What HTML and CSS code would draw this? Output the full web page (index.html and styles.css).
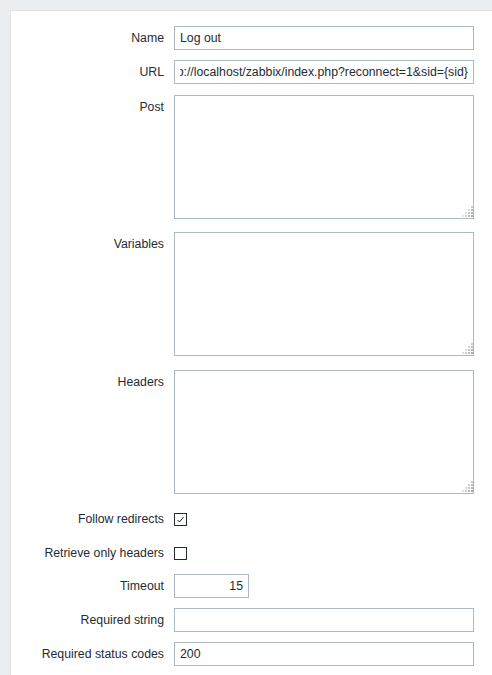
FILE: index.html
```html
<!DOCTYPE html>
<html lang="en">
<head>
  <meta charset="UTF-8" />
  <title>Web scenario step</title>
  <link rel="stylesheet" href="styles.css">
</head>
<body>
  <div class="panel">
    <form class="step-form">
      <div class="row">
        <label class="row-label" for="name">Name</label>
        <div class="row-field"><input type="text" id="name" value="Log out" /></div>
      </div>
      <div class="row row-url">
        <label class="row-label" for="url">URL</label>
        <div class="row-field"><input type="text" id="url" value="http://localhost/zabbix/index.php?reconnect=1&amp;sid={sid}" /></div>
      </div>
      <div class="row row-area row-post">
        <label class="row-label" for="post">Post</label>
        <div class="row-field area-wrap">
          <textarea id="post"></textarea>
          <svg class="grip" width="12" height="12" viewBox="0 0 12 12"><use href="#grip-dots" /></svg>
        </div>
      </div>
      <div class="row row-area">
        <label class="row-label" for="variables">Variables</label>
        <div class="row-field area-wrap">
          <textarea id="variables"></textarea>
          <svg class="grip" width="12" height="12" viewBox="0 0 12 12"><use href="#grip-dots" /></svg>
        </div>
      </div>
      <div class="row row-area">
        <label class="row-label" for="headers">Headers</label>
        <div class="row-field area-wrap">
          <textarea id="headers"></textarea>
          <svg class="grip" width="12" height="12" viewBox="0 0 12 12"><use href="#grip-dots" /></svg>
        </div>
      </div>
      <div class="row row-check">
        <label class="row-label">Follow redirects</label>
        <div class="row-field">
          <span class="check is-checked">
            <svg width="11" height="11" viewBox="0 0 11 11"><path d="M2.5 6 L4.5 8 L8.5 3" fill="none" stroke="#1f2c33" stroke-width="1" /></svg>
          </span>
        </div>
      </div>
      <div class="row row-check">
        <label class="row-label">Retrieve only headers</label>
        <div class="row-field"><span class="check"></span></div>
      </div>
      <div class="row">
        <label class="row-label" for="timeout">Timeout</label>
        <div class="row-field"><input type="text" id="timeout" class="input-small" value="15" /></div>
      </div>
      <div class="row">
        <label class="row-label" for="required">Required string</label>
        <div class="row-field"><input type="text" id="required" value="" /></div>
      </div>
      <div class="row">
        <label class="row-label" for="codes">Required status codes</label>
        <div class="row-field"><input type="text" id="codes" value="200" /></div>
      </div>
    </form>
  </div>

  <!-- resize grip dots, shared by the textareas -->
  <svg width="0" height="0" class="defs">
    <defs>
      <g id="grip-dots">
        <rect x="10" y="1" width="2" height="2" fill="#c9c9c9" />
        <rect x="7" y="4" width="2" height="2" fill="#d6d6d6" />
        <rect x="10" y="4" width="2" height="2" fill="#b9b9b9" />
        <rect x="4" y="7" width="2" height="2" fill="#dcdcdc" />
        <rect x="7" y="7" width="2" height="2" fill="#c6c6c6" />
        <rect x="10" y="7" width="2" height="2" fill="#b3b3b3" />
        <rect x="1" y="10" width="2" height="2" fill="#e2e2e2" />
        <rect x="4" y="10" width="2" height="2" fill="#cfcfcf" />
        <rect x="7" y="10" width="2" height="2" fill="#bdbdbd" />
        <rect x="10" y="10" width="2" height="2" fill="#ababab" />
      </g>
    </defs>
  </svg>

  <script>
    // long URL is shown scrolled to its end, as after typing it
    const url = document.getElementById('url');
    url.scrollLeft = url.scrollWidth;
  </script>
</body>
</html>
```

FILE: styles.css
```css
body {
  margin: 0;
  background-color: #ebeef0;
  font-family: Arial, "Liberation Sans", sans-serif;
  font-size: 12.3px;
  color: #1f2c33;
  overflow: hidden;
}
.panel {
  margin: 10px 0 0 10px;
  background-color: #fff;
  border-top: 1px solid #dfe4e7;
  border-left: 1px solid #dfe4e7;
  padding-top: 15px;
  min-height: 700px;
}
.row {
  display: flex;
  margin-bottom: 10px;
}
.row-url {
  margin-bottom: 11px;
}
.row-area {
  margin-bottom: 14px;
}
.row-post {
  margin-bottom: 13px;
}
.row-label {
  width: 153px;
  margin-right: 10px;
  text-align: right;
  line-height: 14px;
  padding-top: 5px;
  white-space: nowrap;
}
.row-field {
  flex: none;
}
input[type="text"], textarea {
  display: block;
  box-sizing: border-box;
  width: 300px;
  height: 24px;
  margin: 0;
  padding: 0 5px;
  border: 1px solid #acbbc2;
  border-radius: 0;
  background-color: #fff;
  font-family: Arial, "Liberation Sans", sans-serif;
  font-size: 12.3px;
  color: #1f2c33;
  outline: none;
}
textarea {
  height: 124px;
  padding: 4px 5px;
  resize: none;
}
.area-wrap {
  position: relative;
}
.grip {
  position: absolute;
  right: 1px;
  bottom: 2px;
}
.defs {
  position: absolute;
}
.input-small {
  width: 75px !important;
  text-align: right;
}
.row-check {
  height: 22px;
  align-items: flex-start;
  margin-bottom: 9px;
}
.row-area + .row-check {
  margin-top: 15px;
}
.row-check + .row-check {
  margin-top: 12px;
}
.row-check .row-label {
  padding-top: 3px;
}
.check {
  display: block;
  box-sizing: border-box;
  width: 13px;
  height: 13px;
  margin-top: 4px;
  border: 1px solid #1f2c33;
  background: #fff;
}
.check svg {
  display: block;
}
```
